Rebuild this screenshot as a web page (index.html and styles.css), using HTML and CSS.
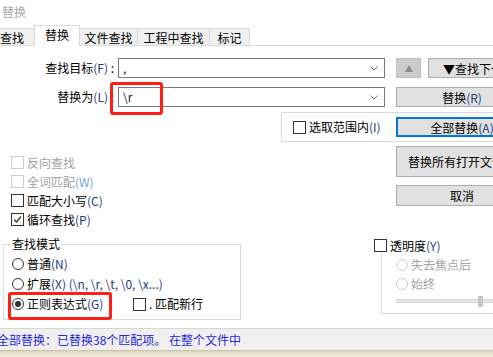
FILE: index.html
```html
<!DOCTYPE html>
<html lang="zh-CN">
<head>
  <meta charset="UTF-8">
  <title>替换</title>
  <link rel="stylesheet" href="styles.css">
</head>
<body>
  <div class="titlebar">替换</div>

  <div class="tabs">
    <div class="tab tab-find">查找</div>
    <div class="tab tab-replace active">替换</div>
    <div class="tab tab-files">文件查找</div>
    <div class="tab tab-project">工程中查找</div>
    <div class="tab tab-mark">标记</div>
  </div>

  <div class="main">
    <div class="row">
      <span class="field-label">查找目标<span class="key">(F)</span> :</span>
      <div class="combo">
        <span class="value">,</span>
        <svg class="chevron" width="8" height="5" viewBox="0 0 8 5"><polyline points="0.5,0.5 4,4 7.5,0.5" fill="none" stroke="#6d6d6d" stroke-width="1"/></svg>
      </div>
      <button class="btn btn-up"><svg width="8" height="7" viewBox="0 0 8 7"><polygon points="4,0 8,7 0,7" fill="#8c8c8c"/></svg></button>
      <button class="btn btn-next">▼查找下一个</button>
    </div>

    <div class="row">
      <span class="field-label">替换为<span class="key">(L)</span> :</span>
      <div class="combo">
        <span class="value">\r</span>
        <svg class="chevron" width="8" height="5" viewBox="0 0 8 5"><polyline points="0.5,0.5 4,4 7.5,0.5" fill="none" stroke="#6d6d6d" stroke-width="1"/></svg>
      </div>
      <button class="btn btn-wide">替换<span class="key">(R)</span></button>
    </div>

    <div class="selbox">
      <label class="check check-range"><span class="box"></span>选取范围内<span class="key">(I)</span></label>
      <button class="btn btn-wide btn-default">全部替换<span class="key">(A)</span></button>
    </div>

    <div class="lower">
      <div class="left-col">
        <label class="check disabled"><span class="box"></span>反向查找</label>
        <label class="check disabled"><span class="box"></span>全词匹配<span class="key">(W)</span></label>
        <label class="check"><span class="box"></span>匹配大小写<span class="key">(C)</span></label>
        <label class="check"><span class="box checked"><svg width="11" height="11" viewBox="0 0 11 11"><polyline points="2,5.5 4.5,8 9,2.5" fill="none" stroke="#333" stroke-width="1.3"/></svg></span>循环查找<span class="key">(P)</span></label>

        <div class="group">
          <div class="group-title">查找模式</div>
          <div class="group-rows">
            <label class="radio"><span class="dot"></span>普通<span class="key">(N)</span></label>
            <label class="radio"><span class="dot"></span>扩展<span class="key">(X) (\n, \r, \t, \0, \x...)</span></label>
            <div class="radio-row">
              <label class="radio radio-regex"><span class="dot on"></span>正则表达式<span class="key">(G)</span></label>
              <label class="check check-inline"><span class="box"></span>. 匹配新行</label>
            </div>
          </div>
        </div>
      </div>

      <div class="right-col">
        <button class="btn btn-wide btn-tall">替换所有打开文件</button>
        <button class="btn btn-wide btn-cancel">取消</button>

        <label class="check check-opacity"><span class="box"></span>透明度<span class="key">(Y)</span></label>
        <div class="opacity-box">
          <label class="radio disabled"><span class="dot"></span>失去焦点后</label>
          <label class="radio disabled"><span class="dot"></span>始终</label>
          <div class="slider"><div class="track"></div><div class="thumb"></div></div>
        </div>
      </div>
    </div>
  </div>

  <div class="status">全部替换：已替换38个匹配项。 在整个文件中</div>
  <div class="taskbar"></div>

  <div class="mark mark-replace"></div>
  <div class="mark mark-regex"></div>
</body>
</html>
```

FILE: styles.css
```css
:root {
  --line: #dadada;
  --btn-bg: #e1e1e1;
  --btn-border: #adadad;
  --key: #1f3b7c;
  --muted: #a3a3a3;
  --mark: #ff1f17;
  --font: "Noto Sans CJK SC", "Noto Sans", sans-serif;
}

body {
  margin: 0;
  width: 493px;
  height: 357px;
  overflow: hidden;
  position: relative;
  display: flex;
  flex-direction: column;
  background: #fff;
  color: #000;
  font-family: var(--font);
  font-size: 12px;
  line-height: 14px;
}

.titlebar {
  height: 25px;
  line-height: 24px;
  padding-left: 2px;
  color: #a6a6a6;
  flex-shrink: 0;
}

/* tabs */
.tabs {
  display: flex;
  align-items: flex-end;
  height: 20px;
  border-bottom: 1px solid var(--line);
  flex-shrink: 0;
}

.tab {
  height: 17px;
  line-height: 17px;
  box-sizing: border-box;
  background: #f0f0f0;
  border-top: 1px solid var(--line);
  border-right: 1px solid var(--line);
  text-align: center;
  flex-shrink: 0;
}

.tab.active {
  height: 21px;
  line-height: 18px;
  margin-bottom: -1px;
  background: #fff;
  border-left: 1px solid var(--line);
  margin-left: -1px;
}

.tab-find { width: 45px; margin-left: -10px; }
.tab-replace { width: 46px; }
.tab-files { width: 58px; }
.tab-project { width: 72px; }
.tab-mark { width: 40px; }

/* main */
.main {
  flex: 1;
  padding-top: 12px;
}

.key {
  color: var(--key);
}

.row {
  display: flex;
  align-items: center;
  height: 20px;
}

.row + .row {
  margin-top: 9px;
}

.row > * {
  flex-shrink: 0;
}

.field-label {
  width: 118px;
  box-sizing: border-box;
  padding-right: 4px;
  text-align: right;
}

.combo {
  width: 267px;
  height: 20px;
  box-sizing: border-box;
  border: 1px solid #7a7a7a;
  display: flex;
  align-items: center;
  justify-content: space-between;
  padding: 0 6px 0 4px;
}

.combo .value {
  color: #1a1a3a;
}

.btn {
  font-family: var(--font);
  font-size: 12px;
  color: #000;
  background: var(--btn-bg);
  border: 1px solid var(--btn-border);
  height: 20px;
  padding: 0;
  margin: 0;
  box-sizing: border-box;
  flex-shrink: 0;
}

.btn-up {
  width: 25px;
  margin-left: 11px;
  background: #cccccc;
  border-color: #c0c0c0;
  display: flex;
  align-items: center;
  justify-content: center;
}

.btn-next {
  width: 102px;
  margin-left: 7px;
}

.row .btn-wide {
  margin-left: 11px;
}

.btn-wide {
  width: 132px;
}

.btn-default {
  border: 2px solid #0078d7;
}

/* selection box */
.selbox {
  margin-top: 5px;
  margin-left: 281px;
  height: 30px;
  box-sizing: border-box;
  border: 1px solid var(--line);
  border-right: none;
  display: flex;
  align-items: center;
  padding-left: 11px;
}

.check {
  display: flex;
  align-items: center;
  height: 19px;
  flex-shrink: 0;
}

.box {
  width: 13px;
  height: 13px;
  box-sizing: border-box;
  border: 1px solid #333;
  background: #fff;
  margin-right: 3px;
  display: flex;
  align-items: center;
  justify-content: center;
  flex-shrink: 0;
}

.check.disabled {
  color: var(--muted);
}

.check.disabled .box {
  border-color: #cccccc;
}

.check.disabled .key {
  color: #7d9fd6;
}

.check-range {
  width: 103px;
}

/* lower area */
.lower {
  display: flex;
}

.left-col {
  width: 374px;
  flex-shrink: 0;
  padding-top: 11px;
}

.left-col > .check {
  padding-left: 11px;
}

.group {
  margin-top: 15px;
  margin-left: 3px;
  width: 238px;
  box-sizing: border-box;
  border: 1px solid var(--line);
  padding: 0 0 5px 8px;
}

.group-title {
  width: fit-content;
  margin-top: -8px;
  margin-left: -1px;
  padding: 0 1px;
  background: #fff;
}

.group-rows {
  margin-top: 3px;
}

.radio {
  display: flex;
  align-items: center;
  height: 20px;
  flex-shrink: 0;
}

.dot {
  width: 12px;
  height: 12px;
  box-sizing: border-box;
  border: 1px solid #333;
  border-radius: 50%;
  background: #fff;
  margin-right: 3px;
  display: flex;
  align-items: center;
  justify-content: center;
  flex-shrink: 0;
}

.dot.on::after {
  content: "";
  width: 6px;
  height: 6px;
  border-radius: 50%;
  background: #333;
}

.radio-row {
  display: flex;
  align-items: center;
}

.radio-regex {
  width: 121px;
}

.right-col {
  display: flex;
  flex-direction: column;
  align-items: flex-start;
}

.right-col > .btn {
  margin-left: 22px;
}

.btn-tall {
  height: 31px;
  margin-top: 4px;
  text-align: left;
  padding-left: 11px;
}

.btn-cancel {
  height: 21px;
  margin-top: 8px;
}

.check-opacity {
  margin-top: 32px;
  height: 15px;
}

.opacity-box {
  margin-left: 7px;
  width: 140px;
  box-sizing: border-box;
  border: 1px solid var(--line);
  border-top: none;
  padding: 2px 0 4px 14px;
}

.radio.disabled {
  height: 19px;
  color: var(--muted);
}

.radio.disabled .dot {
  border-color: #cfcfcf;
}

.slider {
  position: relative;
  height: 16px;
  display: flex;
  align-items: center;
}

.track {
  width: 100%;
  height: 4px;
  box-sizing: border-box;
  background: #e7e7e7;
  border: 1px solid #d6d6d6;
}

.thumb {
  position: absolute;
  left: 82px;
  top: 3px;
  width: 5px;
  height: 11px;
  background: #c6c6c6;
}

/* status bar */
.status {
  height: 21px;
  line-height: 21px;
  border-top: 1px solid #d6d6d6;
  background: #f0f0f0;
  color: #2626e0;
  text-indent: -3px;
  white-space: nowrap;
  flex-shrink: 0;
}

.taskbar {
  height: 7px;
  background: linear-gradient(#c4bca4, #e6dec6 2px, #f2ecdb);
  flex-shrink: 0;
}

/* annotation boxes */
.mark {
  position: absolute;
  border: 3px solid var(--mark);
  border-radius: 3px;
  box-sizing: border-box;
}

.mark-replace {
  left: 110px;
  top: 82px;
  width: 53px;
  height: 33px;
}

.mark-regex {
  left: 8px;
  top: 292px;
  width: 104px;
  height: 28px;
}
```
